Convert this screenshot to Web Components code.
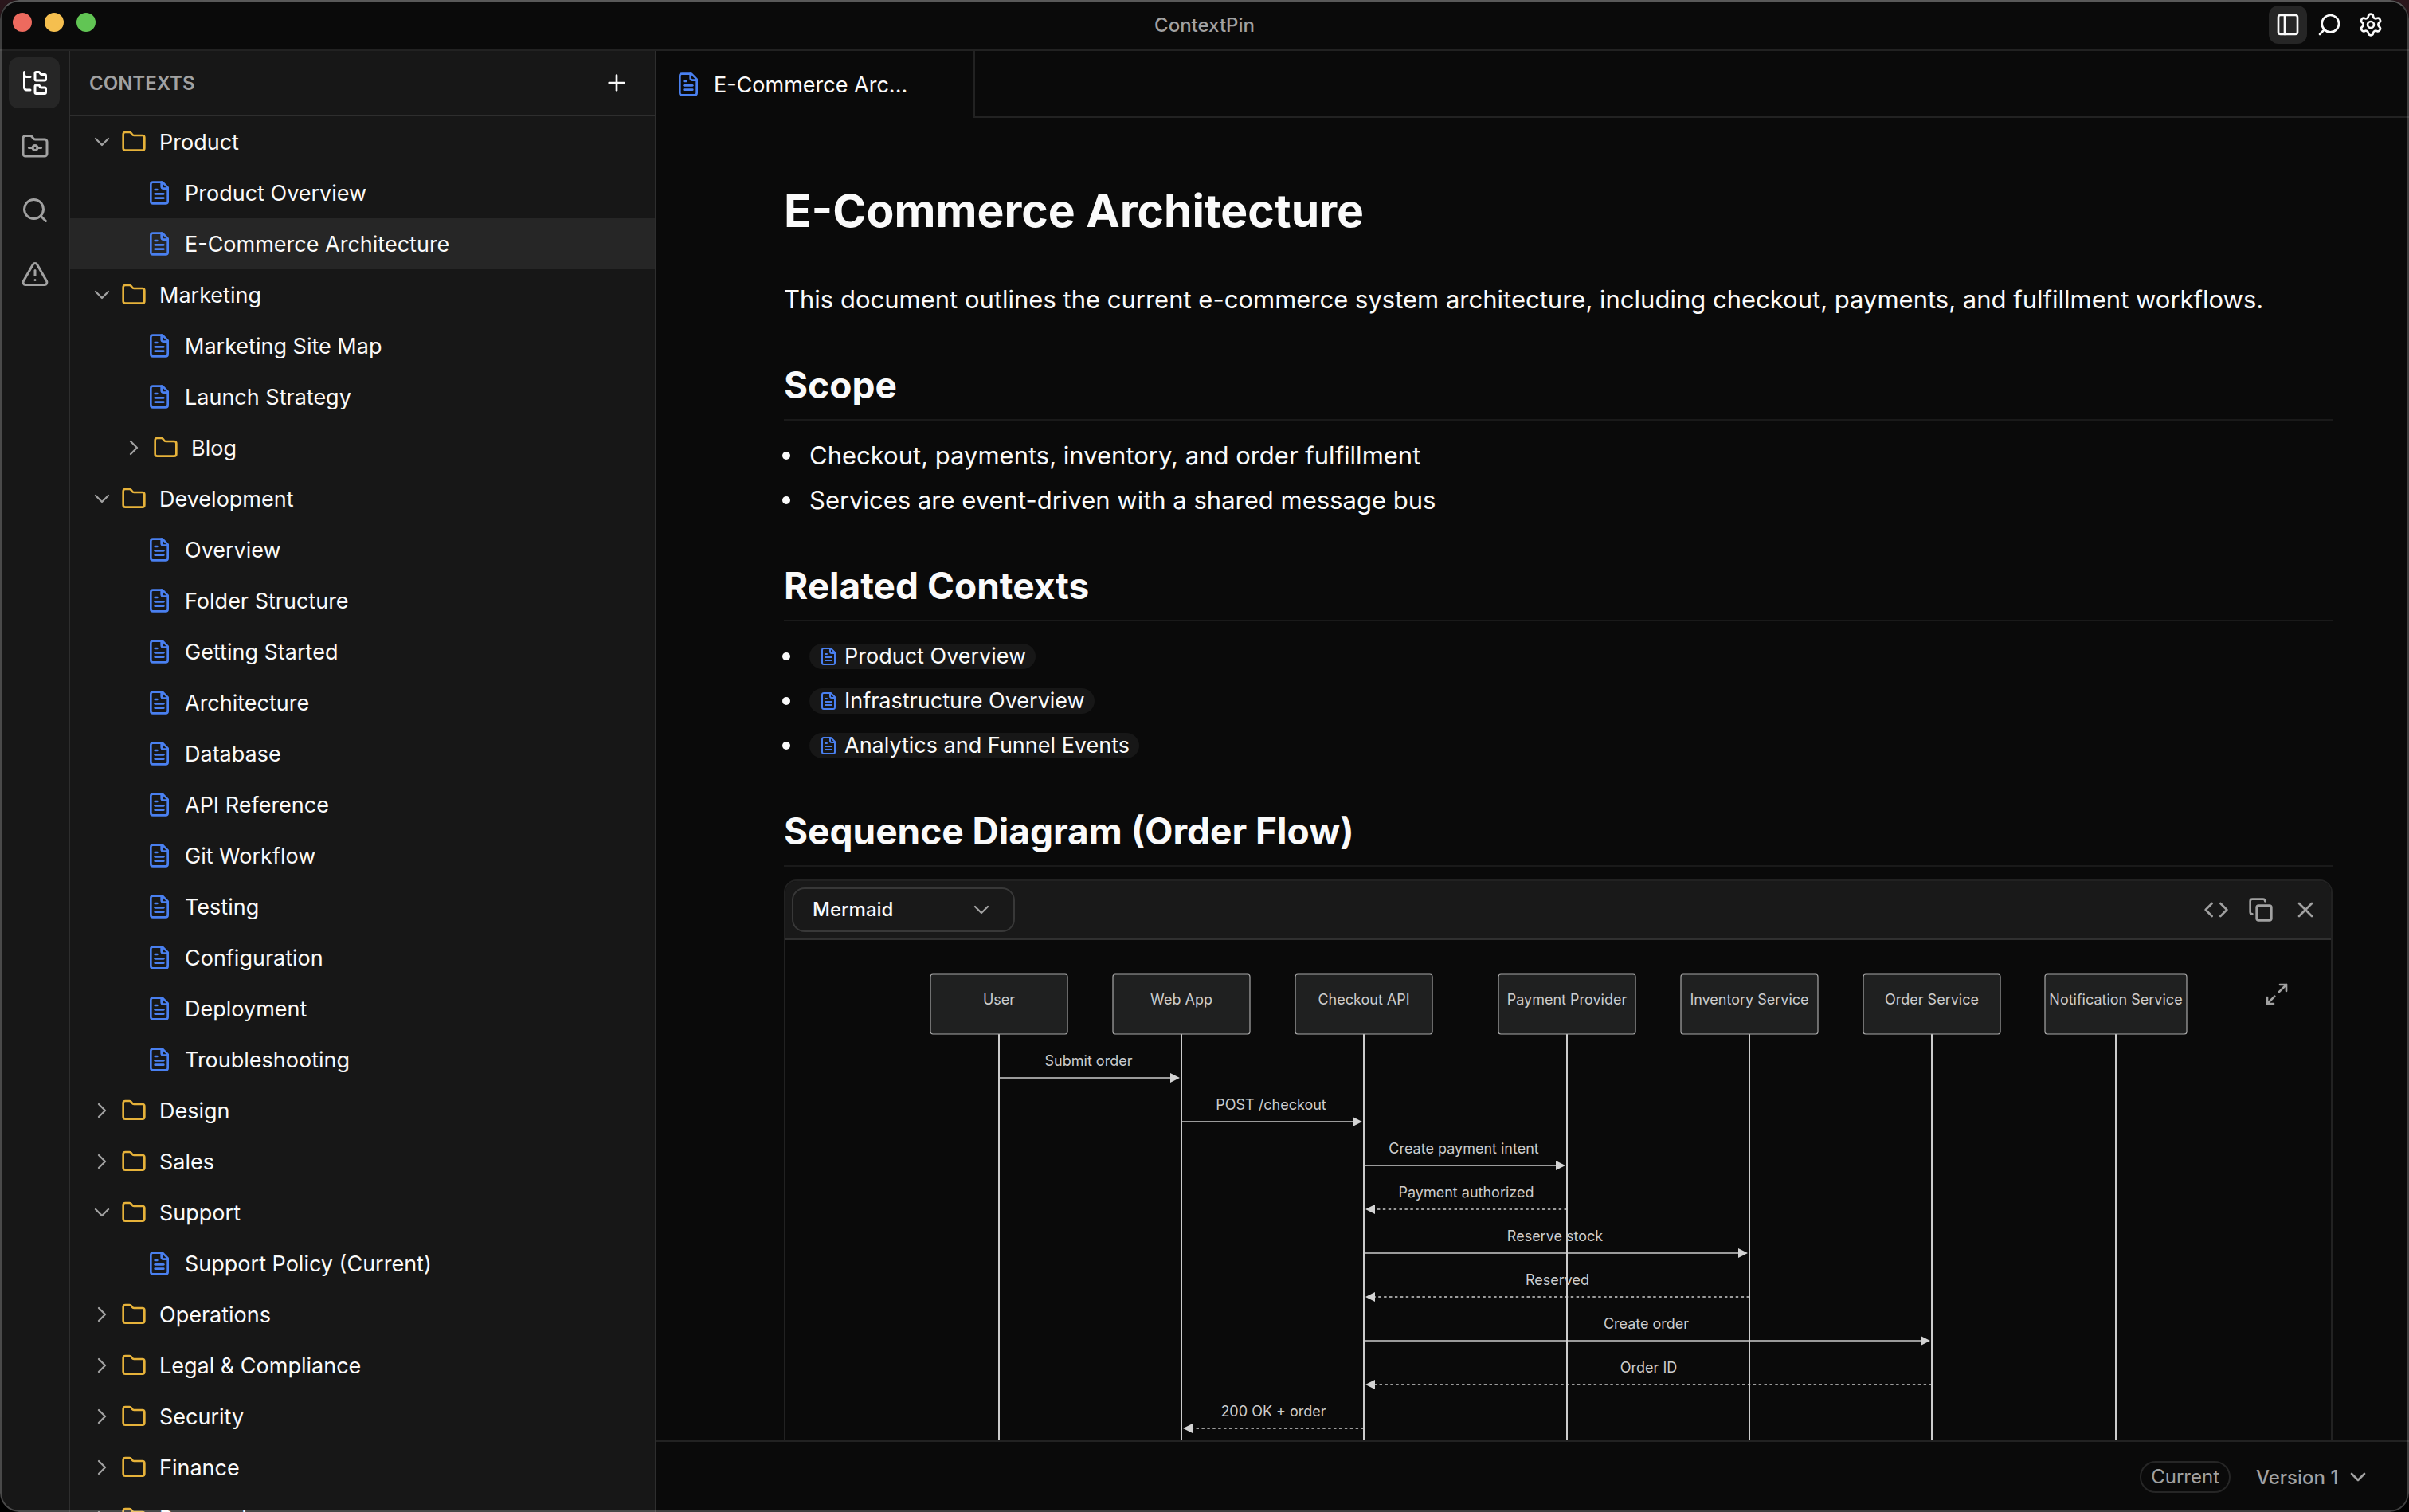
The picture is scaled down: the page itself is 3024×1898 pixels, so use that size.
<!DOCTYPE html>
<html lang="en">
<head>
<meta charset="utf-8">
<title>ContextPin</title>
<style>
  html, body {
    height: 100%;
    margin: 0;
    overflow: hidden;
    background: linear-gradient(#2a161b, #000);
  }
  body {
    --bg: #0a0a0a;
    --panel: #171717;
    --active: #262626;
    --line: #222222;
    --line-panel: #2e2e2e;
    --text: #fafafa;
    --muted: #a1a1a1;
    --folder: #e6b23a;
    --file: #4a80f0;
    font-family: Inter, "Liberation Sans", sans-serif;
    font-size: 27px;
    color: var(--text);
  }
</style>
</head>
<body>
<app-window>
  <title-bar slot="title">ContextPin</title-bar>
  <activity-rail slot="rail"></activity-rail>
  <context-sidebar slot="sidebar">Contexts</context-sidebar>
  <doc-tab slot="tabs">E-Commerce Arc...</doc-tab>

  <doc-page>
    <doc-heading level="1">E-Commerce Architecture</doc-heading>
    <doc-text>This document outlines the current e-commerce system architecture, including checkout, payments, and fulfillment workflows.</doc-text>

    <doc-heading level="2">Scope</doc-heading>
    <doc-list>
      <doc-item>Checkout, payments, inventory, and order fulfillment</doc-item>
      <doc-item>Services are event-driven with a shared message bus</doc-item>
    </doc-list>

    <doc-heading level="2">Related Contexts</doc-heading>
    <doc-list>
      <doc-item><context-chip>Product Overview</context-chip></doc-item>
      <doc-item><context-chip>Infrastructure Overview</context-chip></doc-item>
      <doc-item><context-chip>Analytics and Funnel Events</context-chip></doc-item>
    </doc-list>

    <doc-heading level="2">Sequence Diagram (Order Flow)</doc-heading>
    <code-card><sequence-diagram></sequence-diagram></code-card>
  </doc-page>

  <status-bar slot="status"></status-bar>
</app-window>

<script>
const RESET = `
  * { margin: 0; padding: 0; box-sizing: border-box; }
  :host { display: block; box-sizing: border-box; }
  button, select {
    font: inherit;
    color: inherit;
    background: none;
    border: 0;
    cursor: pointer;
  }
  a { color: inherit; text-decoration: none; }
`;

const ICONS = {
  tree: '<path d="M20 10a1 1 0 0 0 1-1V6a1 1 0 0 0-1-1h-2.5a1 1 0 0 1-.8-.4l-.9-1.2A1 1 0 0 0 15 3h-2a1 1 0 0 0-1 1v5a1 1 0 0 0 1 1Z"/><path d="M20 21a1 1 0 0 0 1-1v-3a1 1 0 0 0-1-1h-2.9a1 1 0 0 1-.88-.55l-.42-.85a1 1 0 0 0-.92-.6H13a1 1 0 0 0-1 1v5a1 1 0 0 0 1 1Z"/><path d="M3 5a2 2 0 0 0 2 2h3"/><path d="M3 3v13a2 2 0 0 0 2 2h3"/>',
  git: '<circle cx="12" cy="13" r="2"/><path d="M14 13h3"/><path d="M7 13h3"/><path d="M20 20a2 2 0 0 0 2-2V8a2 2 0 0 0-2-2h-7.9a2 2 0 0 1-1.69-.9L9.6 3.9A2 2 0 0 0 7.93 3H4a2 2 0 0 0-2 2v13a2 2 0 0 0 2 2Z"/>',
  search: '<circle cx="11" cy="11" r="8"/><path d="m21 21-4.3-4.3"/>',
  searchLeft: '<circle cx="13" cy="11" r="8"/><path d="m3 21 4.3-4.3"/>',
  warning: '<path d="m21.73 18-8-14a2 2 0 0 0-3.48 0l-8 14A2 2 0 0 0 4 21h16a2 2 0 0 0 1.73-3"/><path d="M12 9v4"/><path d="M12 17h.01"/>',
  plus: '<path d="M5 12h14"/><path d="M12 5v14"/>',
  down: '<path d="m6 9 6 6 6-6"/>',
  right: '<path d="m9 18 6-6-6-6"/>',
  folder: '<path d="M20 20a2 2 0 0 0 2-2V8a2 2 0 0 0-2-2h-7.9a2 2 0 0 1-1.69-.9L9.6 3.9A2 2 0 0 0 7.93 3H4a2 2 0 0 0-2 2v13a2 2 0 0 0 2 2Z"/>',
  file: '<path d="M15 2H6a2 2 0 0 0-2 2v16a2 2 0 0 0 2 2h12a2 2 0 0 0 2-2V7Z"/><path d="M14 2v4a2 2 0 0 0 2 2h4"/><path d="M10 9H8"/><path d="M16 13H8"/><path d="M16 17H8"/>',
  panel: '<rect width="18" height="18" x="3" y="3" rx="2"/><path d="M9 3v18"/>',
  gear: '<path d="M9.671 4.136a2.34 2.34 0 0 1 4.659 0 2.34 2.34 0 0 0 3.319 1.915 2.34 2.34 0 0 1 2.33 4.033 2.34 2.34 0 0 0 0 3.831 2.34 2.34 0 0 1-2.33 4.033 2.34 2.34 0 0 0-3.319 1.915 2.34 2.34 0 0 1-4.659 0 2.34 2.34 0 0 0-3.32-1.915 2.34 2.34 0 0 1-2.33-4.033 2.34 2.34 0 0 0 0-3.831A2.34 2.34 0 0 1 6.35 6.051a2.34 2.34 0 0 0 3.319-1.915"/><circle cx="12" cy="12" r="3"/>',
  code: '<path d="m16 18 6-6-6-6"/><path d="m8 6-6 6 6 6"/>',
  copy: '<rect width="14" height="14" x="8" y="8" rx="2"/><path d="M4 16c-1.1 0-2-.9-2-2V4c0-1.1.9-2 2-2h10c1.1 0 2 .9 2 2"/>',
  close: '<path d="M18 6 6 18"/><path d="m6 6 12 12"/>',
  expand: '<path d="M15 3h6v6"/><path d="m21 3-7 7"/><path d="m3 21 7-7"/><path d="M9 21H3v-6"/>'
};

class UiIcon extends HTMLElement {
  constructor() {
    super();
    this.attachShadow({mode: 'open'});
  }

  connectedCallback() {
    const size = this.getAttribute('size') || 32;
    const weight = this.getAttribute('weight') || 2;
    this.shadowRoot.innerHTML = `
      <style>
        :host { display: block; flex: none; width: ${size}px; height: ${size}px; }
        svg { display: block; width: 100%; height: 100%; }
      </style>
      <svg viewBox="0 0 24 24" fill="none" stroke="currentColor" stroke-width="${weight}"
        stroke-linecap="round" stroke-linejoin="round" aria-hidden="true">${ICONS[this.getAttribute('name')]}</svg>
    `;
  }
}

class AppWindow extends HTMLElement {
  constructor() {
    super();
    this.attachShadow({mode: 'open'}).innerHTML = `
      <style>
        ${RESET}
        :host {
          position: relative;
          display: grid;
          grid-template: auto minmax(0, 1fr) / auto auto minmax(0, 1fr);
          height: 100vh;
          border-radius: 24px;
          overflow: hidden;
          background: var(--bg);
        }
        /* hairline frame of the window, over everything else */
        :host::after {
          content: "";
          position: absolute;
          inset: 0;
          border: 2px solid rgba(255, 255, 255, 0.22);
          border-top-color: rgba(255, 255, 255, 0.32);
          border-radius: 24px;
          pointer-events: none;
        }
        ::slotted([slot=title]) { grid-column: 1 / -1; }
        main {
          display: flex;
          flex-direction: column;
          min-height: 0;
        }
        .tabs { display: flex; flex: none; height: 84px; }
        .tabs::after { content: ""; flex: 1; border-bottom: 2px solid var(--line); }
        .content { flex: 1; min-height: 0; overflow: hidden; }
      </style>
      <slot name="title"></slot>
      <slot name="rail"></slot>
      <slot name="sidebar"></slot>
      <main>
        <div class="tabs"><slot name="tabs"></slot></div>
        <div class="content"><slot></slot></div>
        <slot name="status"></slot>
      </main>
    `;
  }
}

class TitleBar extends HTMLElement {
  constructor() {
    super();
    this.attachShadow({mode: 'open'}).innerHTML = `
      <style>
        ${RESET}
        :host {
          display: grid;
          grid-template-columns: 1fr auto 1fr;
          align-items: center;
          height: 64px;
          padding: 0 16px;
          border-bottom: 2px solid var(--line);
        }
        .lights { display: flex; gap: 16px; align-self: start; padding-top: 16px; }
        .lights button { width: 24px; height: 24px; border-radius: 50%; }
        .close { background: #ed6a5e; }
        .min { background: #f5bf4f; }
        .max { background: #61c554; }
        .name { font-size: 24px; font-weight: 500; color: var(--muted); }
        .tools { display: flex; justify-content: flex-end; gap: 4px; padding-right: 8px; }
        .tools button {
          display: grid;
          place-items: center;
          width: 48px;
          height: 48px;
          border-radius: 12px;
        }
        .tools .on { background: var(--active); }
      </style>
      <div class="lights">
        <button class="close" aria-label="Close"></button>
        <button class="min" aria-label="Minimize"></button>
        <button class="max" aria-label="Zoom"></button>
      </div>
      <div class="name"><slot></slot></div>
      <div class="tools">
        <button class="on" aria-label="Toggle sidebar"><ui-icon name="panel"></ui-icon></button>
        <button aria-label="Search"><ui-icon name="searchLeft"></ui-icon></button>
        <button aria-label="Settings"><ui-icon name="gear"></ui-icon></button>
      </div>
    `;
  }
}

class ActivityRail extends HTMLElement {
  constructor() {
    super();
    this.attachShadow({mode: 'open'}).innerHTML = `
      <style>
        ${RESET}
        :host {
          width: 88px;
          background: var(--panel);
          border-right: 2px solid var(--line-panel);
          color: var(--muted);
        }
        nav {
          display: flex;
          flex-direction: column;
          align-items: center;
          gap: 16px;
          padding-top: 8px;
        }
        button {
          display: grid;
          place-items: center;
          width: 64px;
          height: 64px;
          padding-left: 2px;
          border-radius: 12px;
        }
        .on { background: var(--active); color: #fff; }
      </style>
      <nav>
        <button class="on" aria-label="Contexts"><ui-icon name="tree" size="36"></ui-icon></button>
        <button aria-label="Repositories"><ui-icon name="git" size="36"></ui-icon></button>
        <button aria-label="Search"><ui-icon name="search" size="36"></ui-icon></button>
        <button aria-label="Problems"><ui-icon name="warning" size="36"></ui-icon></button>
      </nav>
    `;
  }
}

const TREE = [
  {name: 'Product', items: ['Product Overview', 'E-Commerce Architecture']},
  {name: 'Marketing', items: ['Marketing Site Map', 'Launch Strategy', {name: 'Blog'}]},
  {name: 'Development', items: ['Overview', 'Folder Structure', 'Getting Started', 'Architecture', 'Database',
    'API Reference', 'Git Workflow', 'Testing', 'Configuration', 'Deployment', 'Troubleshooting']},
  {name: 'Design'},
  {name: 'Sales'},
  {name: 'Support', items: ['Support Policy (Current)']},
  {name: 'Operations'},
  {name: 'Legal & Compliance'},
  {name: 'Security'},
  {name: 'Finance'},
  {name: 'Research'}
];
const SELECTED = 'E-Commerce Architecture';

class TreeFolder extends HTMLElement {
  constructor() {
    super();
    this.attachShadow({mode: 'open'});
  }

  connectedCallback() {
    const open = this.hasAttribute('open');
    this.shadowRoot.innerHTML = `
      <style>
        ${RESET}
        button {
          display: flex;
          align-items: center;
          width: 100%;
          height: 64px;
          padding-left: calc(24px + var(--depth, 0) * 40px);
        }
        .arrow { color: var(--muted); margin-right: 8px; }
        .folder { color: var(--folder); margin-right: 16px; }
        .items { --depth: 1; }
      </style>
      <button aria-expanded="${open}">
        <ui-icon class="arrow" name="${open ? 'down' : 'right'}" weight="1.75"></ui-icon>
        <ui-icon class="folder" name="folder"></ui-icon>
        <slot name="label"></slot>
      </button>
      <div class="items"><slot></slot></div>
    `;
  }
}

class TreeFile extends HTMLElement {
  constructor() {
    super();
    this.attachShadow({mode: 'open'}).innerHTML = `
      <style>
        ${RESET}
        :host([selected]) { background: var(--active); }
        a {
          display: flex;
          align-items: center;
          gap: 16px;
          height: 64px;
          padding-left: 96px;
        }
        ui-icon { color: var(--file); }
      </style>
      <a href="#"><ui-icon name="file"></ui-icon><slot></slot></a>
    `;
  }
}

class ContextSidebar extends HTMLElement {
  constructor() {
    super();
    this.attachShadow({mode: 'open'});
  }

  connectedCallback() {
    this.shadowRoot.innerHTML = `
      <style>
        ${RESET}
        :host {
          width: 736px;
          min-height: 0;
          overflow: hidden;
          background: var(--panel);
          border-right: 2px solid var(--line-panel);
        }
        header {
          display: flex;
          align-items: center;
          justify-content: space-between;
          height: 82px;
          padding: 0 24px;
          border-bottom: 2px solid var(--line-panel);
        }
        h2 {
          font-size: 24px;
          font-weight: 600;
          text-transform: uppercase;
          color: var(--muted);
        }
        header button { display: grid; place-items: center; width: 48px; height: 48px; }
      </style>
      <header>
        <h2><slot></slot></h2>
        <button aria-label="New context"><ui-icon name="plus"></ui-icon></button>
      </header>
      <nav>${TREE.map(node => this.row(node)).join('')}</nav>
    `;
  }

  row(node) {
    if (typeof node === 'string') {
      return `<tree-file ${node === SELECTED ? 'selected' : ''}>${node}</tree-file>`;
    }
    const items = node.items || [];
    return `
      <tree-folder ${items.length ? 'open' : ''}>
        <span slot="label">${node.name.replace('&', '&amp;')}</span>
        ${items.map(item => this.row(item)).join('')}
      </tree-folder>
    `;
  }
}

class DocTab extends HTMLElement {
  constructor() {
    super();
    this.attachShadow({mode: 'open'}).innerHTML = `
      <style>
        ${RESET}
        :host { width: 400px; border-right: 2px solid var(--line); }
        button {
          display: flex;
          align-items: center;
          gap: 16px;
          width: 100%;
          height: 100%;
          padding: 0 24px;
        }
        ui-icon { color: var(--file); }
      </style>
      <button role="tab" aria-selected="true"><ui-icon name="file"></ui-icon><slot></slot></button>
    `;
  }
}

class DocPage extends HTMLElement {
  constructor() {
    super();
    this.attachShadow({mode: 'open'}).innerHTML = `
      <style>
        ${RESET}
        :host { padding: 80px 96px 80px 160px; font-size: 31px; line-height: 56px; }
      </style>
      <article><slot></slot></article>
    `;
  }
}

class DocHeading extends HTMLElement {
  constructor() {
    super();
    this.attachShadow({mode: 'open'});
  }

  connectedCallback() {
    const tag = 'h' + this.getAttribute('level');
    this.shadowRoot.innerHTML = `
      <style>
        ${RESET}
        h1 { font-size: 57px; line-height: 74px; font-weight: 700; margin-bottom: 46px; }
        h2 {
          font-size: 46px;
          line-height: 62px;
          font-weight: 700;
          margin: 48px 0 16px;
          padding-bottom: 12px;
          border-bottom: 2px solid #1a1a1a;
        }
      </style>
      <${tag}><slot></slot></${tag}>
    `;
  }
}

class DocText extends HTMLElement {
  constructor() {
    super();
    this.attachShadow({mode: 'open'}).innerHTML = `<style>${RESET}</style><p><slot></slot></p>`;
  }
}

class DocList extends HTMLElement {
  constructor() {
    super();
    this.attachShadow({mode: 'open'}).innerHTML = `
      <style>${RESET}</style>
      <div role="list"><slot></slot></div>
    `;
  }
}

class DocItem extends HTMLElement {
  constructor() {
    super();
    this.attachShadow({mode: 'open'}).innerHTML = `
      <style>
        ${RESET}
        .item { display: flex; align-items: center; gap: 24px; height: 56px; margin-left: -2px; }
        .item::before {
          content: "";
          width: 10px;
          height: 10px;
          border-radius: 50%;
          background: currentColor;
        }
      </style>
      <div class="item" role="listitem"><slot></slot></div>
    `;
  }
}

class ContextChip extends HTMLElement {
  constructor() {
    super();
    this.attachShadow({mode: 'open'}).innerHTML = `
      <style>
        ${RESET}
        a {
          display: flex;
          align-items: center;
          gap: 8px;
          height: 32px;
          padding: 0 12px;
          border-radius: 16px;
          background: var(--panel);
          font-size: 27px;
          line-height: 32px;
        }
        ui-icon { color: var(--file); }
      </style>
      <a href="#"><ui-icon name="file" size="24"></ui-icon><slot></slot></a>
    `;
  }
}

class CodeCard extends HTMLElement {
  constructor() {
    super();
    this.attachShadow({mode: 'open'}).innerHTML = `
      <style>
        ${RESET}
        :host {
          position: relative;
          border: 2px solid var(--line);
          border-radius: 16px;
          overflow: hidden;
          font-size: 24px;
          line-height: 32px;
        }
        header {
          display: flex;
          align-items: center;
          gap: 8px;
          height: 74px;
          padding: 0 8px;
          background: #191919;
          border-bottom: 2px solid #303030;
          color: var(--muted);
        }
        .picker { display: grid; align-items: center; width: 280px; margin-right: auto; }
        .picker > * { grid-area: 1 / 1; }
        select {
          appearance: none;
          width: 100%;
          height: 56px;
          padding: 0 24px;
          border: 2px solid #383838;
          border-radius: 16px;
          color: var(--text);
          font-weight: 500;
        }
        .picker ui-icon { justify-self: end; margin-right: 26px; pointer-events: none; }
        button { display: grid; place-items: center; width: 48px; height: 48px; color: var(--muted); }
        /* floats over the canvas of the diagram */
        .expand { position: absolute; top: 118px; right: 44px; }
      </style>
      <header>
        <div class="picker">
          <select aria-label="Block language"><option>Mermaid</option></select>
          <ui-icon name="down" weight="1.75"></ui-icon>
        </div>
        <button aria-label="Show code"><ui-icon name="code"></ui-icon></button>
        <button aria-label="Copy"><ui-icon name="copy"></ui-icon></button>
        <button aria-label="Remove"><ui-icon name="close"></ui-icon></button>
      </header>
      <slot></slot>
      <button class="expand" aria-label="Full screen"><ui-icon name="expand"></ui-icon></button>
    `;
  }
}

// x is the lifeline, w the width of the actor box
const ACTORS = [
  {name: 'User', x: 88, w: 172},
  {name: 'Web App', x: 317, w: 172},
  {name: 'Checkout API', x: 546, w: 172},
  {name: 'Payment Provider', x: 801, w: 172},
  {name: 'Inventory Service', x: 1030, w: 172},
  {name: 'Order Service', x: 1259, w: 172},
  {name: 'Notification Service', x: 1490, w: 178}
];
// [from, to, label]; a message that goes left is a reply and is dashed
const MESSAGES = [
  [0, 1, 'Submit order'],
  [1, 2, 'POST /checkout'],
  [2, 3, 'Create payment intent'],
  [3, 2, 'Payment authorized'],
  [2, 4, 'Reserve stock'],
  [4, 2, 'Reserved'],
  [2, 5, 'Create order'],
  [5, 2, 'Order ID'],
  [2, 1, '200 OK + order']
];

class SequenceDiagram extends HTMLElement {
  constructor() {
    super();
    this.attachShadow({mode: 'open'});
  }

  connectedCallback() {
    const actors = ACTORS.map(a => `
      <line class="life" x1="${a.x}" y1="118" x2="${a.x}" y2="800"/>
      <rect x="${a.x - a.w / 2}" y="43" width="${a.w}" height="75" rx="3"/>
      <text x="${a.x}" y="81">${a.name}</text>
    `).join('');

    const messages = MESSAGES.map(([from, to, label], i) => {
      const y = 173 + i * 55;
      const reply = to < from;
      const dir = reply ? -1 : 1;
      const tip = ACTORS[to].x - dir * 2;
      const base = tip - dir * 12;
      const mid = (ACTORS[from].x + ACTORS[to].x) / 2 + (reply ? 1 : -2);
      return `
        <line class="${reply ? 'reply' : 'call'}" x1="${ACTORS[from].x}" y1="${y}" x2="${base}" y2="${y}"/>
        <path d="M${tip} ${y} L${base} ${y - 6} V${y + 6} Z"/>
        <text x="${mid}" y="${y - 15}">${label}</text>
      `;
    }).join('');

    this.shadowRoot.innerHTML = `
      <style>
        ${RESET}
        svg { display: block; width: 1580px; max-width: 100%; margin: 0 auto; }
        rect { fill: #1f2020; stroke: #a8a8a8; stroke-width: 1.2; }
        line { stroke: #cccccc; }
        .life { stroke-width: 2; }
        .call, .reply { stroke-width: 1.7; }
        .reply { stroke-dasharray: 3.45; }
        path { fill: #d3d3d3; }
        text { fill: #cccccc; font-size: 18px; text-anchor: middle; }
      </style>
      <svg viewBox="0 0 1580 800" role="img" aria-label="Order flow">${actors}${messages}</svg>
    `;
  }
}

class StatusBar extends HTMLElement {
  constructor() {
    super();
    this.attachShadow({mode: 'open'}).innerHTML = `
      <style>
        ${RESET}
        :host {
          display: flex;
          flex: none;
          align-items: center;
          justify-content: flex-end;
          gap: 32px;
          height: 90px;
          padding-right: 48px;
          border-top: 2px solid var(--line);
          font-size: 24px;
          color: var(--muted);
        }
        .badge {
          height: 40px;
          padding: 0 12px;
          border: 2px solid var(--active);
          border-radius: 20px;
          line-height: 36px;
        }
        .version { display: grid; align-items: center; }
        .version > * { grid-area: 1 / 1; }
        select { appearance: none; height: 48px; padding-right: 40px; font-weight: 500; }
        ui-icon { justify-self: end; pointer-events: none; }
      </style>
      <span class="badge">Current</span>
      <div class="version">
        <select aria-label="Version"><option>Version 1</option></select>
        <ui-icon name="down"></ui-icon>
      </div>
    `;
  }
}

customElements.define('ui-icon', UiIcon);
customElements.define('app-window', AppWindow);
customElements.define('title-bar', TitleBar);
customElements.define('activity-rail', ActivityRail);
customElements.define('tree-folder', TreeFolder);
customElements.define('tree-file', TreeFile);
customElements.define('context-sidebar', ContextSidebar);
customElements.define('doc-tab', DocTab);
customElements.define('doc-page', DocPage);
customElements.define('doc-heading', DocHeading);
customElements.define('doc-text', DocText);
customElements.define('doc-list', DocList);
customElements.define('doc-item', DocItem);
customElements.define('context-chip', ContextChip);
customElements.define('code-card', CodeCard);
customElements.define('sequence-diagram', SequenceDiagram);
customElements.define('status-bar', StatusBar);
</script>
</body>
</html>
